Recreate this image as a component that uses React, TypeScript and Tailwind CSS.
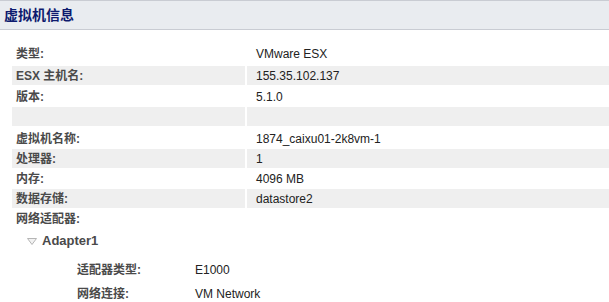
const cjk = "font-['Liberation_Sans','Noto_Sans_CJK_SC',sans-serif]";

type Row = { label: string; value: string; shaded?: boolean; top: string };

const rows: Row[] = [
  { label: "类型:", value: "VMware ESX", top: "mt-[14px]" },
  { label: "ESX 主机名:", value: "155.35.102.137", shaded: true, top: "mt-[3px]" },
  { label: "版本:", value: "5.1.0", top: "mt-[2px]" },
  { label: "", value: "", shaded: true, top: "mt-[1px]" },
  { label: "虚拟机名称:", value: "1874_caixu01-2k8vm-1", top: "mt-[3px]" },
  { label: "处理器:", value: "1", shaded: true, top: "mt-[1px]" },
  { label: "内存:", value: "4096 MB", top: "mt-[1px]" },
  { label: "数据存储:", value: "datastore2", shaded: true, top: "mt-[1px]" },
];

function InfoRow({ label, value, shaded, top }: Row) {
  const bg = shaded ? "bg-[#efefef]" : "";
  return (
    <div className={`flex h-[19px] gap-[2px] pl-[12px] ${top}`}>
      <div className={`flex w-[233px] items-center pl-[4px] text-[12px] font-bold text-[#4a4a4a] ${bg}`}>{label}</div>
      <div className={`flex flex-1 items-center pl-[9px] text-[12px] text-[#222] ${bg}`}>{value}</div>
    </div>
  );
}

export default function App() {
  return (
    <div className={`h-[302px] w-[609px] overflow-hidden bg-white ${cjk}`}>
      <div className="flex h-[30px] items-center border-y border-[#c9ccd3] bg-[#e9ecf0] pl-[4px]">
        <span className="text-[14px] font-bold text-[#0d1a6e]">虚拟机信息</span>
      </div>
      {rows.map((r, i) => (
        <InfoRow key={i} {...r} />
      ))}
      <div className="mt-[1px] flex h-[19px] items-center pl-[16px] text-[12px] font-bold text-[#4a4a4a]">网络适配器:</div>
      <div className="mt-[4px] flex h-[18px] items-center pl-[27px] text-[13px] font-bold text-[#4a4a4a]">
        <svg width="10" height="7" viewBox="0 0 10 7" className="mr-[5px]">
          <path d="M0.5 0.5 H9.5 L5 6.5 Z" fill="#f2f2f2" stroke="#b5b5b5" strokeWidth="1" />
        </svg>
        Adapter1
      </div>
      <div className="mt-[10px] flex h-[19px] items-center pl-[77px] text-[12px]">
        <span className="w-[118px] font-bold text-[#4a4a4a]">适配器类型:</span>
        <span className="text-[#222]">E1000</span>
      </div>
      <div className="mt-[5px] flex h-[19px] items-center pl-[77px] text-[12px]">
        <span className="w-[118px] font-bold text-[#4a4a4a]">网络连接:</span>
        <span className="text-[#222]">VM Network</span>
      </div>
    </div>
  );
}
